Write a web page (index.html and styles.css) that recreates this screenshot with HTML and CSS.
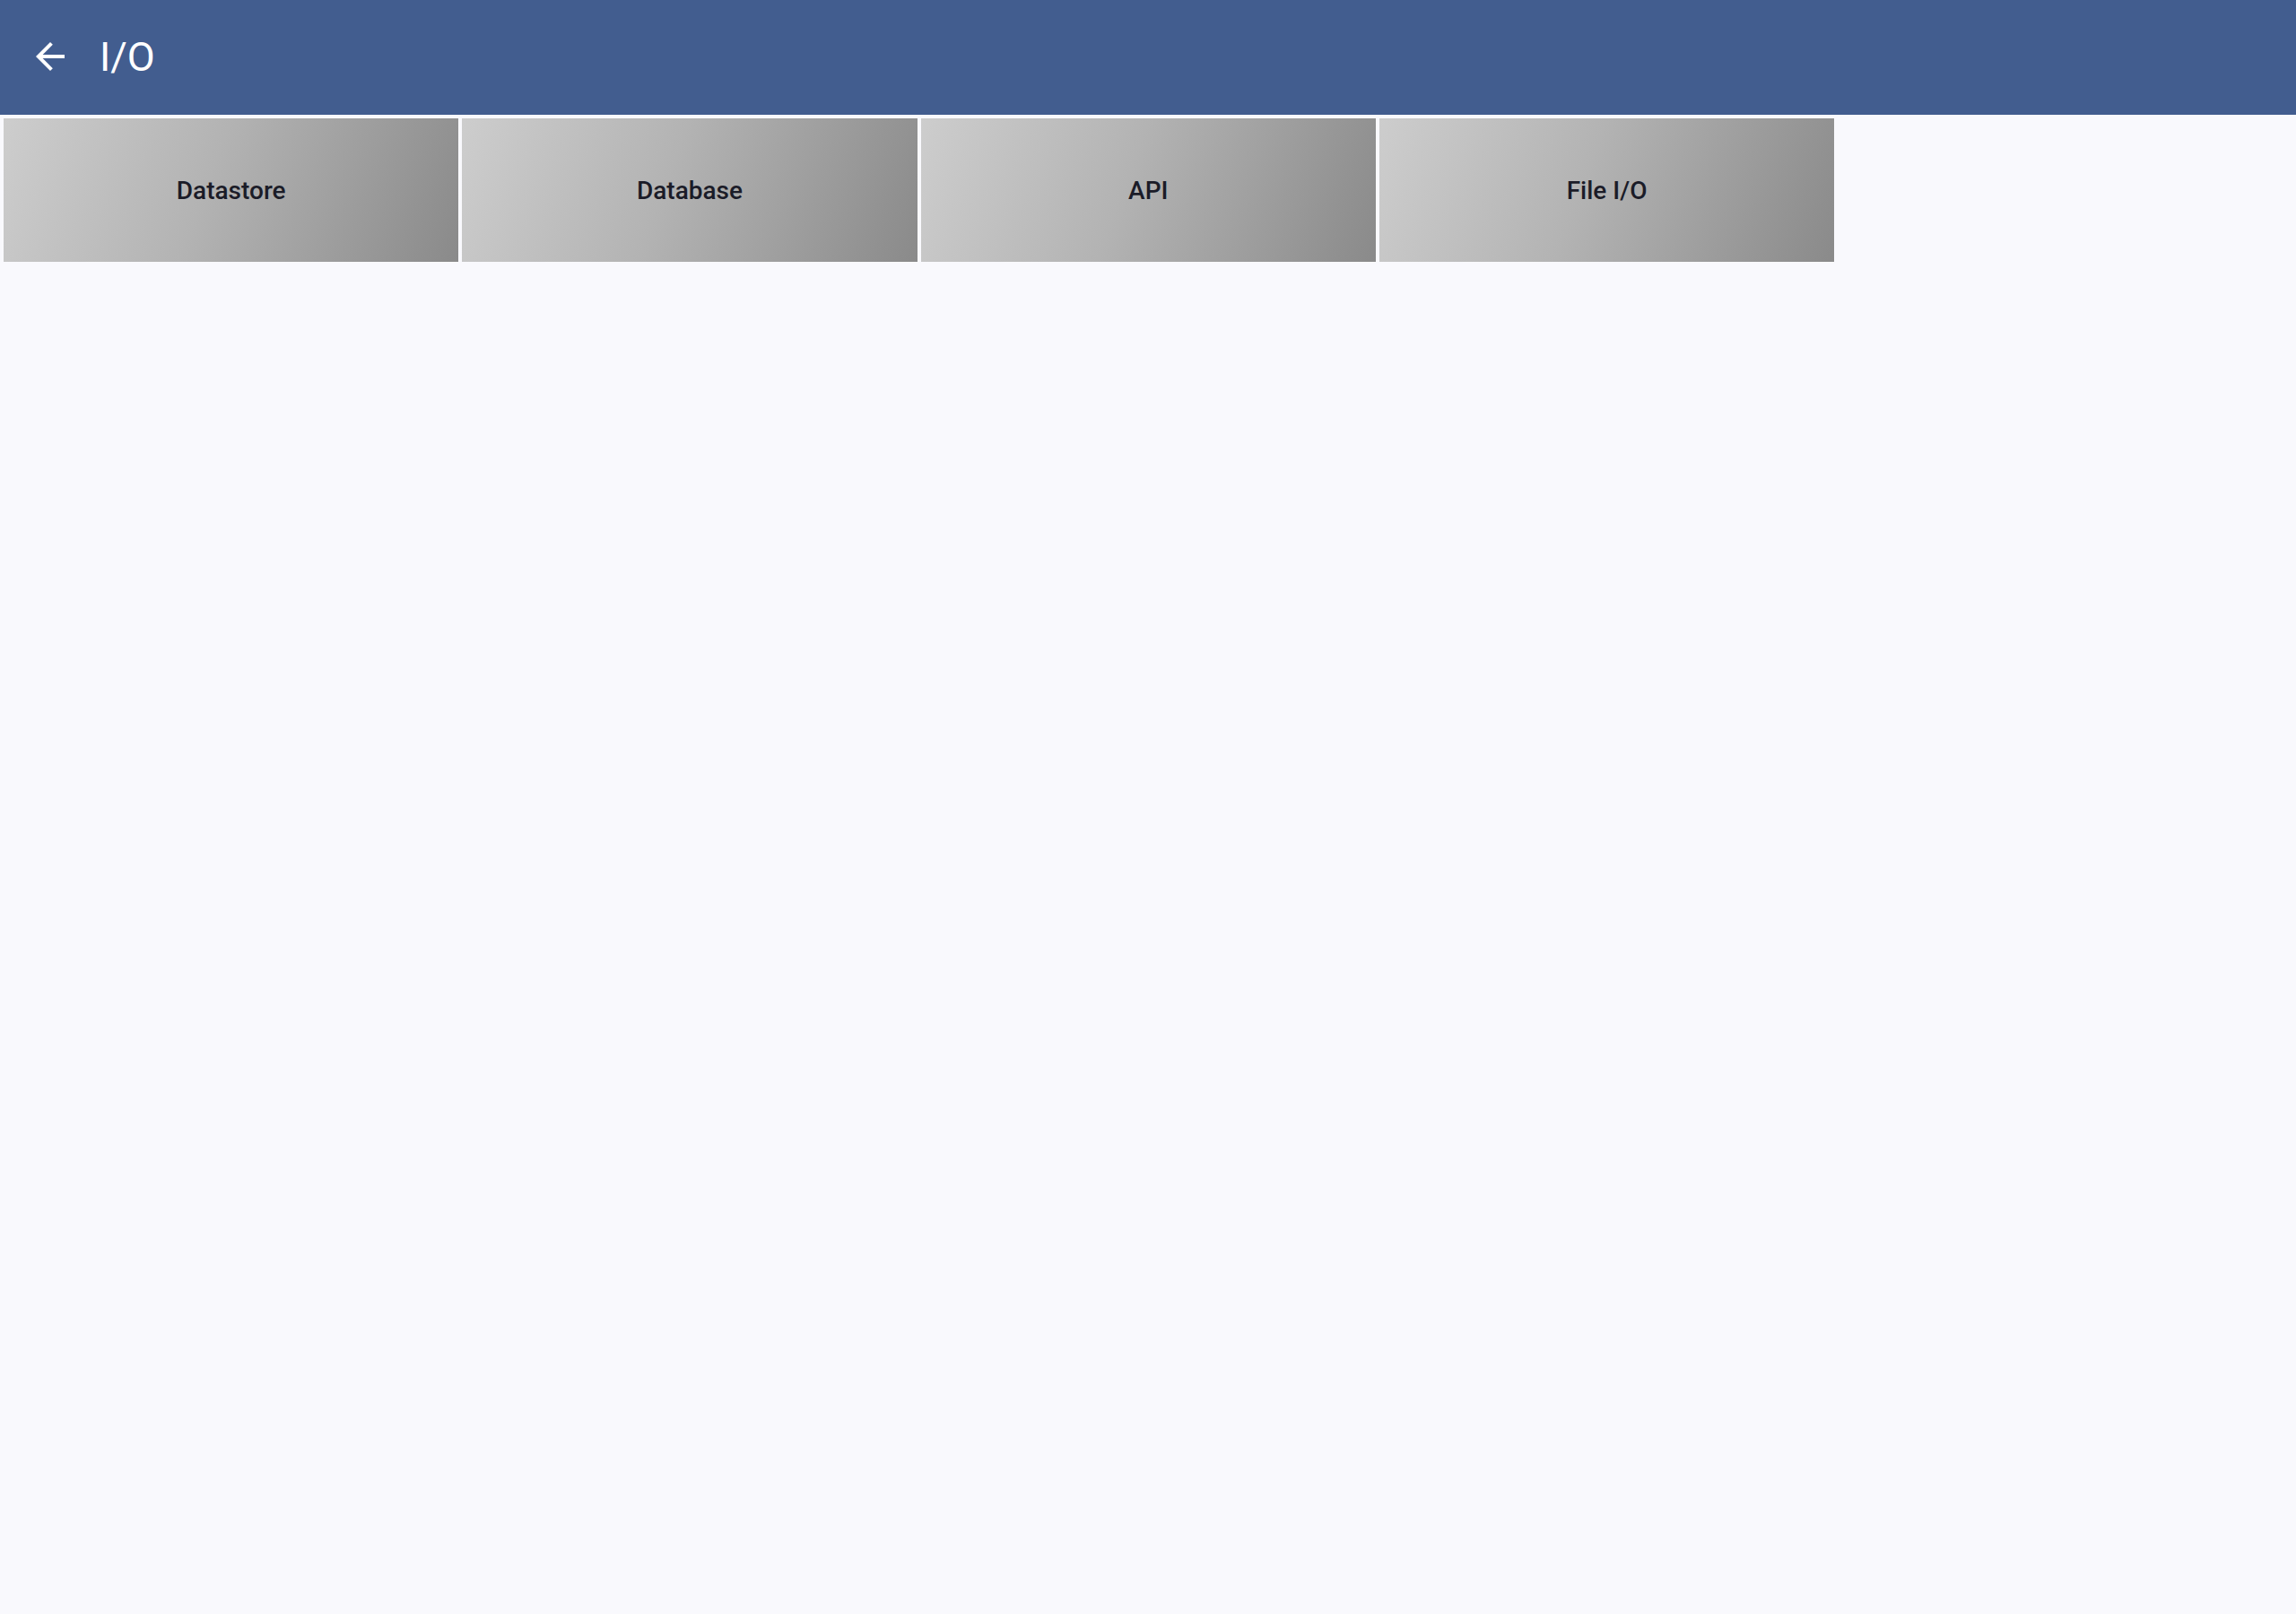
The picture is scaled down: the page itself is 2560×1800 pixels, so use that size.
FILE: index.html
```html
<!DOCTYPE html>
<html>
<head>
<meta charset="utf-8">
<link rel="stylesheet" href="styles.css">
</head>
<body>
<header class="appbar">
  <button class="back" aria-label="Back">
    <svg viewBox="0 0 24 24" width="48" height="48"><path fill="#fff" d="M20 11H7.83l5.59-5.59L12 4l-8 8 8 8 1.41-1.41L7.83 13H20v-2z"/></svg>
  </button>
  <h1 class="title">I/O</h1>
</header>
<main class="grid">
  <div class="tile">Datastore</div>
  <div class="tile">Database</div>
  <div class="tile">API</div>
  <div class="tile">File I/O</div>
</main>
</body>
</html>
```
FILE: styles.css
```css
html, body {
  margin: 0;
  padding: 0;
  background: #f9f9fd;
  font-family: Roboto, "Noto Sans", sans-serif;
}
.appbar {
  height: 128px;
  background: #425d8f;
  display: flex;
  align-items: center;
  padding-left: 32px;
  box-sizing: border-box;
}
.back {
  width: 48px;
  height: 48px;
  padding: 0;
  border: 0;
  background: none;
  display: flex;
  margin-top: -2px;
}
.title {
  margin: 0 0 0 31px;
  color: #fff;
  font-weight: 400;
  font-size: 45px;
  line-height: 1;
  margin-top: -2px;
}
.grid {
  display: grid;
  grid-template-columns: repeat(4, 507.4px);
  gap: 4px 3.9px;
  padding: 4px;
}
.tile {
  height: 160px;
  display: flex;
  align-items: center;
  justify-content: center;
  background: linear-gradient(110deg, #cdcdcd 0%, #b3b3b3 45%, #8a8a8a 100%);
  color: #1b1c28;
  font-size: 28px;
  font-weight: 500;
}
```
